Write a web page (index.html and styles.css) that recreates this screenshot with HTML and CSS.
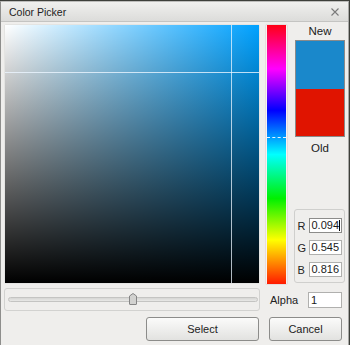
FILE: index.html
```html
<!DOCTYPE html>
<html lang="en">
<head>
    <meta charset="UTF-8">
    <title>Color Picker</title>
    <link rel="stylesheet" href="styles.css">
</head>
<body>
    <div class="dialog">
        <div class="titlebar">
            <span class="title">Color Picker</span>
            <svg class="close" width="8" height="8" viewBox="0 0 8 8">
                <path d="M0.5 0.5 L7.5 7.5 M7.5 0.5 L0.5 7.5" stroke="#7a7a7a" stroke-width="1.1"/>
            </svg>
        </div>
        <div class="content">
            <div class="picker-row">
                <div class="sv-box">
                    <div class="sv-area">
                        <div class="cross-h"></div>
                        <div class="cross-v"></div>
                    </div>
                </div>
                <div class="hue-box">
                    <div class="hue-area">
                        <div class="hue-mark"></div>
                    </div>
                </div>
                <div class="side">
                    <div class="swatch-label">New</div>
                    <div class="swatch">
                        <div class="swatch-new"></div>
                        <div class="swatch-old"></div>
                    </div>
                    <div class="swatch-label">Old</div>
                    <div class="rgb-group">
                        <div class="rgb-row"><span class="lbl">R</span><span class="field focused">0.094<span class="caret"></span></span></div>
                        <div class="rgb-row"><span class="lbl">G</span><span class="field">0.545</span></div>
                        <div class="rgb-row"><span class="lbl">B</span><span class="field">0.816</span></div>
                    </div>
                </div>
            </div>
            <div class="alpha-row">
                <div class="slider-group">
                    <div class="track">
                        <svg class="thumb" width="8" height="12" viewBox="0 0 8 12">
                            <path d="M0.5 3 L4 0.5 L7.5 3 L7.5 11 Q7.5 11.5 7 11.5 L1 11.5 Q0.5 11.5 0.5 11 Z" fill="#d2d2d0" stroke="#858585"/>
                        </svg>
                    </div>
                </div>
                <span class="alpha-label">Alpha</span>
                <span class="field alpha-field">1</span>
            </div>
            <div class="buttons">
                <button class="btn btn-select">Select</button>
                <button class="btn btn-cancel">Cancel</button>
            </div>
        </div>
    </div>
</body>
</html>
```

FILE: styles.css
```css
* {
    margin: 0;
    padding: 0;
    box-sizing: border-box;
}
html, body {
    width: 350px;
    height: 345px;
    overflow: hidden;
    background-color: #3d3f3a;
    font-family: 'Liberation Sans', Arial, sans-serif;
}
.dialog {
    margin-top: 1px;
    width: 349px;
    height: 344px;
    background-color: #efeeec;
    border-left: 1px solid #8e8e8c;
    border-right: 1px solid #a8a8a6;
    border-top: 1px solid #bdbdbb;
}
.titlebar {
    height: 20px;
    display: flex;
    align-items: center;
    justify-content: space-between;
    padding: 0 8px 0 8px;
    background: linear-gradient(to bottom, #f0f0ee, #dcdcda);
    border-bottom: 1px solid #c4c4c2;
}
.title {
    font-size: 10.5px;
    color: #222;
}
.close {
    margin-right: 1px;
}
.content {
    padding: 2px 0 0 3px;
}
.picker-row {
    display: flex;
    align-items: flex-start;
}
.sv-box {
    width: 256px;
    height: 260px;
    border: 1px solid #e4e4e2;
    border-radius: 2px;
    background: #fff;
}
.sv-area {
    position: relative;
    width: 254px;
    height: 258px;
    background: linear-gradient(to top, #000, rgba(0, 0, 0, 0)),
                linear-gradient(to right, #fff, hsl(202, 100%, 50%));
}
.cross-h {
    position: absolute;
    left: 0;
    right: 0;
    top: 47px;
    height: 1px;
    background: rgba(235, 245, 255, 0.8);
}
.cross-v {
    position: absolute;
    top: 0;
    bottom: 0;
    left: 226px;
    width: 1px;
    background: rgba(235, 245, 255, 0.75);
}
.hue-box {
    margin-left: 5px;
    width: 23px;
    height: 261px;
    border: 1px solid #e6dcdc;
    border-radius: 2px;
    padding: 0 1px;
    background: #f6f2f2;
}
.hue-area {
    position: relative;
    height: 259px;
    background: linear-gradient(to bottom, #ff0014, #ff00ff 17%, #0000ff 33%, #00ffff 50%, #00f000 67%, #ffff00 83%, #ff1a00);
}
.hue-mark {
    position: absolute;
    left: 0;
    right: 0;
    top: 112px;
    height: 0;
    border-top: 1px dashed rgba(255, 255, 255, 0.9);
}
.side {
    margin-left: 5px;
    width: 52px;
    height: 260px;
    display: flex;
    flex-direction: column;
    align-items: center;
}
.swatch-label {
    font-size: 11.5px;
    color: #1a1a1a;
    height: 15px;
    line-height: 15px;
    margin-left: 2px;
}
.swatch {
    margin: 1px 0 4px 2px;
    width: 50px;
    height: 97px;
    border: 1px solid #8a8a8a;
    display: flex;
    flex-direction: column;
}
.swatch-new {
    flex: 1;
    background-color: #1a88cb;
}
.swatch-old {
    flex: 1;
    background-color: #e01400;
}
.rgb-group {
    margin-top: auto;
    margin-bottom: 1px;
    width: 51px;
    height: 74px;
    border: 1px solid #cfcfcd;
    border-radius: 3px;
    padding: 8px 2px 0 3px;
    display: flex;
    flex-direction: column;
    gap: 7px;
}
.rgb-row {
    display: flex;
    align-items: center;
    justify-content: space-between;
}
.lbl {
    font-size: 11px;
    color: #222;
    width: 9px;
}
.field {
    position: relative;
    display: inline-block;
    width: 33px;
    height: 15px;
    line-height: 13px;
    padding-left: 2px;
    font-size: 11px;
    color: #1a1a1a;
    white-space: nowrap;
    background: #fff;
    border: 1px solid #b0b0ae;
}
.field.focused {
    border-color: #8c8c8a;
}
.caret {
    position: absolute;
    right: 1px;
    top: 1px;
    width: 1px;
    height: 11px;
    background: #000;
}
.alpha-row {
    display: flex;
    align-items: center;
    margin-top: 3px;
}
.slider-group {
    width: 256px;
    height: 23px;
    border: 1px solid #d2d2d0;
    border-radius: 3px;
    padding: 0 1px 0 3px;
    display: flex;
    align-items: center;
}
.track {
    position: relative;
    width: 250px;
    height: 5px;
    border: 1px solid #c4c4c2;
    border-radius: 3px;
    background: linear-gradient(to bottom, #d6d6d4, #e8e8e6);
}
.thumb {
    position: absolute;
    left: 120px;
    top: -5px;
}
.alpha-label {
    margin-left: 10px;
    font-size: 11px;
    color: #222;
    width: 38px;
}
.alpha-field {
    width: 34px;
    height: 16px;
    line-height: 14px;
}
.buttons {
    display: flex;
    justify-content: flex-end;
    gap: 10px;
    margin-top: 6px;
    padding-right: 6px;
}
.btn {
    height: 24px;
    font-family: 'Liberation Sans', Arial, sans-serif;
    font-size: 11px;
    color: #222;
    border: 1px solid #8c8c8a;
    border-radius: 3px;
    background: linear-gradient(to bottom, #fbfbfa, #e2e2e0);
}
.btn-select {
    width: 113px;
}
.btn-cancel {
    width: 73px;
}
```
